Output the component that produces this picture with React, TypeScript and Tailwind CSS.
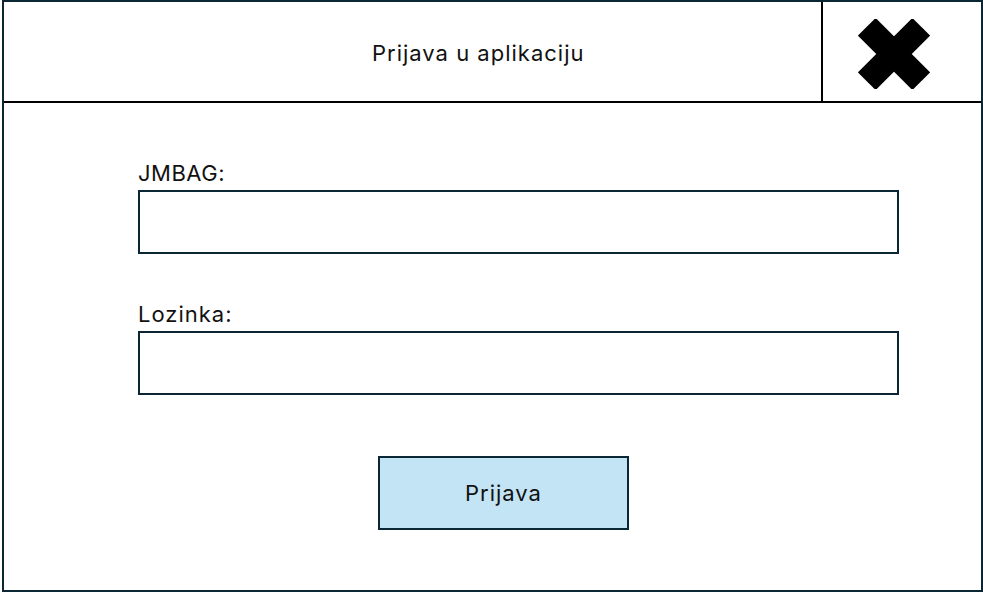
export default function App() {
  return (
    <div
      className="ml-[2px] w-[981px] h-[592px] border-2 border-[#0b2635] bg-white flex flex-col text-[#111]"
      style={{ fontFamily: "Inter, 'Noto Sans', sans-serif" }}
    >
      <header className="flex h-[101px] border-b-2 border-black">
        <div className="w-[817px] flex items-center pl-[368px] pt-[3px] text-[22px] tracking-[1px]">
          Prijava u aplikaciju
        </div>
        <div className="flex-1 border-l-2 border-black flex items-center pl-[35px] pt-[4px]">
          <svg width="72" height="70" viewBox="0 0 72 70">
            <g transform="translate(36 35) rotate(45)">
              <rect x="-38.5" y="-12.5" width="77" height="25" fill="black" />
              <rect x="-12.5" y="-38.5" width="25" height="77" fill="black" />
            </g>
          </svg>
        </div>
      </header>
      <main className="flex flex-col pl-[134px] pt-[56px]">
        <label className="text-[22px] leading-[28px] tracking-[0.5px] mb-[3px]">JMBAG:</label>
        <div className="w-[761px] h-[64px] border-2 border-[#0b2635]" />
        <label className="text-[22px] leading-[28px] tracking-[1px] mt-[46px] mb-[3px]">Lozinka:</label>
        <div className="w-[761px] h-[64px] border-2 border-[#0b2635]" />
        <button className="ml-[240px] mt-[61px] w-[251px] h-[74px] bg-[#c3e4f4] border-2 border-[#0b2635] text-[22px] tracking-[1px]">
          Prijava
        </button>
      </main>
    </div>
  );
}
